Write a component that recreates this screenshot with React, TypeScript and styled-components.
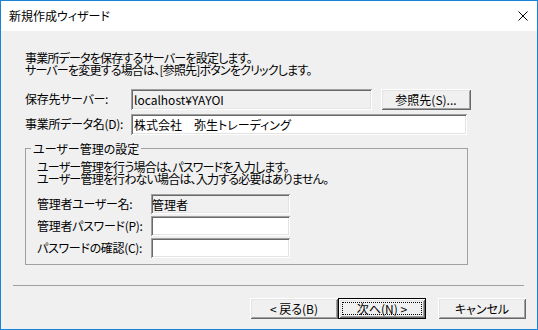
import styled, { createGlobalStyle } from 'styled-components';

const GlobalStyle = createGlobalStyle`
  html, body {
    margin: 0;
    padding: 0;
    background: #ffffff;
  }
  body {
    font-family: 'Noto Sans CJK JP', 'Noto Sans', sans-serif;
    font-size: 12px;
    font-feature-settings: 'palt';
    color: #000000;
  }
  * {
    box-sizing: border-box;
  }
`;

const sunken = `
  box-shadow: inset 1px 1px #a0a0a0, inset -1px -1px #ffffff, inset 2px 2px #696969, inset -2px -2px #e3e3e3;
`;

const raised = `
  box-shadow: inset 1px 1px #ffffff, inset -1px -1px #696969, inset 2px 2px #e3e3e3, inset -2px -2px #a0a0a0;
`;

export default function App() {
  return (
    <>
      <GlobalStyle />
      <Styled.Window>
        <Styled.TitleBar>
          <Styled.Title>新規作成ウィザード</Styled.Title>
          <Styled.Close viewBox="0 0 10 10" width="10" height="10">
            <path d="M0.5 0.5 L9.5 9.5 M9.5 0.5 L0.5 9.5" stroke="#000" strokeWidth="1" />
          </Styled.Close>
        </Styled.TitleBar>

        <Styled.Body>
          <Styled.Main>
            <Styled.Text>
              事業所データを保存するサーバーを設定します。
              <br />
              サーバーを変更する場合は、[参照先]ボタンをクリックします。
            </Styled.Text>

            <Styled.Row $top={13}>
              <Styled.Label $width={106}>保存先サーバー:</Styled.Label>
              <Styled.Field $width={241} $disabled readOnly value="localhost¥YAYOI" />
              <Styled.Button $width={90} style={{ marginLeft: 9 }}>
                参照先(S)...
              </Styled.Button>
            </Styled.Row>

            <Styled.Row $top={4}>
              <Styled.Label $width={106}>事業所データ名(D):</Styled.Label>
              <Styled.Field $width={336} readOnly value="株式会社　弥生トレーディング" />
            </Styled.Row>

            <Styled.Group>
              <Styled.Legend>ユーザー管理の設定</Styled.Legend>
              <Styled.GroupBody>
                <Styled.Text>
                  ユーザー管理を行う場合は、パスワードを入力します。
                  <br />
                  ユーザー管理を行わない場合は、入力する必要はありません。
                </Styled.Text>
                <Styled.GroupRows>
                  <Styled.Row>
                    <Styled.Label $width={114}>管理者ユーザー名:</Styled.Label>
                    <Styled.Field $width={139} $small $disabled readOnly value="管理者" />
                  </Styled.Row>
                  <Styled.Row>
                    <Styled.Label $width={114}>管理者パスワード(P):</Styled.Label>
                    <Styled.Field $width={139} $small type="password" readOnly value="" />
                  </Styled.Row>
                  <Styled.Row>
                    <Styled.Label $width={114}>パスワードの確認(C):</Styled.Label>
                    <Styled.Field $width={139} $small type="password" readOnly value="" />
                  </Styled.Row>
                </Styled.GroupRows>
              </Styled.GroupBody>
            </Styled.Group>
          </Styled.Main>

          <Styled.Separator />

          <Styled.ButtonBar>
            <Styled.Button $width={88}>&lt; 戻る(B)</Styled.Button>
            <Styled.Button $width={88} $default>
              次へ(N) &gt;
            </Styled.Button>
            <Styled.Button $width={88} style={{ marginLeft: 12 }}>
              キャンセル
            </Styled.Button>
          </Styled.ButtonBar>
        </Styled.Body>
      </Styled.Window>
    </>
  );
}

const Styled = {
  Window: styled.div`
    display: flex;
    flex-direction: column;

    width: 538px;
    height: 330px;
    border: 1px solid #1883d7;
    background: #ffffff;
  `,

  TitleBar: styled.div`
    display: flex;
    align-items: center;
    justify-content: space-between;

    height: 30px;
    padding: 0 9px 1px 8px;
    background: #ffffff;
  `,

  Title: styled.div`
    font-size: 12px;
    line-height: 14px;
  `,

  Close: styled.svg`
    display: block;
  `,

  Body: styled.div`
    display: flex;
    flex-direction: column;
    flex: 1;

    background: #f0f0f0;
  `,

  Main: styled.div`
    padding: 21px 0 0 24px;
  `,

  Text: styled.div`
    line-height: 12px;
    letter-spacing: -0.8px;
    white-space: nowrap;
  `,

  Row: styled.div<{ $top?: number }>`
    display: flex;
    align-items: flex-start;

    margin-top: ${({ $top }) => $top ?? 0}px;
  `,

  Label: styled.div<{ $width: number }>`
    width: ${({ $width }) => $width}px;
    height: 20px;
    line-height: 20px;
    letter-spacing: -0.3px;
    white-space: nowrap;
  `,

  Field: styled.input<{ $width: number; $disabled?: boolean; $small?: boolean }>`
    display: block;

    width: ${({ $width }) => $width}px;
    height: ${({ $small }) => ($small ? 20 : 21)}px;
    margin: 0;
    padding: ${({ $small }) => ($small ? '0 1px' : '0 3px')};
    border: none;
    outline: none;

    background: ${({ $disabled }) => ($disabled ? '#f0f0f0' : '#ffffff')};
    ${sunken};

    font-family: 'Noto Sans CJK JP', 'Noto Sans', sans-serif;
    font-size: 12px;
    font-feature-settings: 'palt';
    line-height: ${({ $small }) => ($small ? 16 : 20)}px;
    color: #000000;
  `,

  Button: styled.button<{ $width: number; $default?: boolean }>`
    display: block;

    width: ${({ $width }) => $width}px;
    height: 21px;
    margin: 0;
    padding: 0;

    background: #f0f0f0;
    border: ${({ $default }) => ($default ? '1px solid #000000' : 'none')};
    ${raised};
    outline: ${({ $default }) => ($default ? '1px dotted #000000' : 'none')};
    outline-offset: -5px;

    font-family: 'Noto Sans CJK JP', 'Noto Sans', sans-serif;
    font-size: 12px;
    font-feature-settings: 'palt';
    line-height: 19px;
    color: #000000;
  `,

  Group: styled.fieldset`
    width: 443px;
    margin: 7px 0 0 0;
    padding: 0 0 6px 5px;
    border: 1px solid #a0a0a0;
    min-width: 0;
  `,

  Legend: styled.legend`
    padding: 0 2px;
    line-height: 13px;
  `,

  GroupBody: styled.div`
    padding: 6px 0 0 6px;
  `,

  GroupRows: styled.div`
    display: flex;
    flex-direction: column;
    gap: 2px;

    margin-top: 9px;
  `,

  Separator: styled.hr`
    height: 0;
    margin: 20px 13px 0 12px;
    border: none;
    border-top: 1px solid #a0a0a0;
  `,

  ButtonBar: styled.div`
    display: flex;
    justify-content: flex-end;

    margin-top: 12px;
    padding-right: 11px;
  `,
};
